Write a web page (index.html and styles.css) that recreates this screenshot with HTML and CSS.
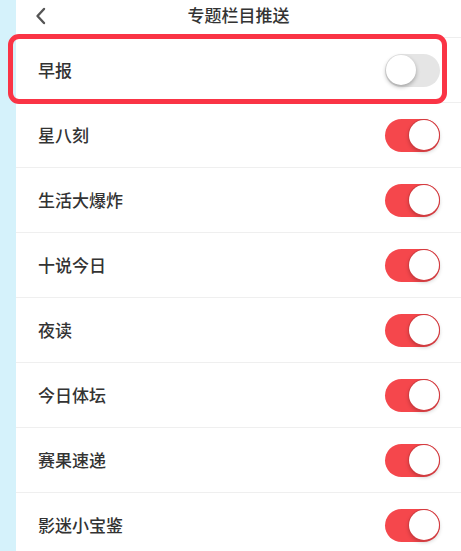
FILE: index.html
```html
<!DOCTYPE html>
<html lang="zh">
<head>
<meta charset="utf-8">
<title>专题栏目推送</title>
<link rel="stylesheet" href="styles.css">
</head>
<body>
<div class="page">
  <div class="side"></div>
  <div class="main">
    <header class="bar">
      <svg class="back" width="14" height="18" viewBox="0 0 14 18"><path d="M10 2 L3.5 9 L10 16" fill="none" stroke="#555" stroke-width="2.4" stroke-linecap="round" stroke-linejoin="round"/></svg>
      <div class="title">专题栏目推送</div>
    </header>
    <ul class="list">
      <li class="row hl"><span class="label">早报</span><span class="sw off"><i></i></span></li>
      <li class="row"><span class="label">星八刻</span><span class="sw on"><i></i></span></li>
      <li class="row"><span class="label">生活大爆炸</span><span class="sw on"><i></i></span></li>
      <li class="row"><span class="label">十说今日</span><span class="sw on"><i></i></span></li>
      <li class="row"><span class="label">夜读</span><span class="sw on"><i></i></span></li>
      <li class="row"><span class="label">今日体坛</span><span class="sw on"><i></i></span></li>
      <li class="row"><span class="label">赛果速递</span><span class="sw on"><i></i></span></li>
      <li class="row"><span class="label">影迷小宝鉴</span><span class="sw on"><i></i></span></li>
    </ul>
  </div>
</div>
</body>
</html>
```
FILE: styles.css
```css
html, body {
  margin: 0;
  padding: 0;
  background: #fff;
}
body {
  font-family: "Noto Sans CJK SC", "Noto Sans", sans-serif;
  color: #333;
}
.page {
  display: flex;
  width: 461px;
  height: 551px;
  overflow: hidden;
}
.side {
  width: 16px;
  flex: none;
  background: #d5f2fb;
}
.main {
  flex: 1;
  display: flex;
  flex-direction: column;
  background: #fff;
}
.bar {
  flex: none;
  height: 37px;
  border-bottom: 1px solid #eee;
  display: flex;
  align-items: center;
  position: relative;
}
.back {
  margin-left: 18px;
  margin-top: -6px;
}
.title {
  position: absolute;
  left: 0;
  right: 0;
  top: 3px;
  text-align: center;
  font-size: 17px;
  line-height: 24px;
  font-weight: 500;
  color: #333;
}
.list {
  flex: none;
  list-style: none;
  margin: 0;
  padding: 0;
}
.row {
  height: 64px;
  border-bottom: 1px solid #efefef;
  display: flex;
  align-items: center;
  justify-content: space-between;
  padding: 0 21px 0 22px;
  position: relative;
}
.label {
  font-size: 17px;
  line-height: 24px;
  font-weight: 500;
  color: #333;
  margin-top: -1px;
}
.hl::after {
  content: "";
  position: absolute;
  left: -8px;
  right: 14px;
  top: -4px;
  bottom: -2px;
  border: 5px solid #fa3445;
  border-radius: 11px;
}
.sw {
  width: 55px;
  height: 33px;
  border-radius: 17px;
  position: relative;
  flex: none;
}
.sw i {
  position: absolute;
  top: 1.5px;
  width: 30px;
  height: 30px;
  border-radius: 50%;
  background: #fff;
  box-shadow: 0 2px 4px rgba(0,0,0,0.3);
}
.sw.on {
  background: #f5474c;
}
.sw.on i {
  right: 1.5px;
  box-shadow: 0 0 0 1px #d23c40, 0 2px 4px rgba(0,0,0,0.25);
}
.sw.off {
  background: #e5e5e5;
}
.sw.off i {
  left: 1px;
}
```
